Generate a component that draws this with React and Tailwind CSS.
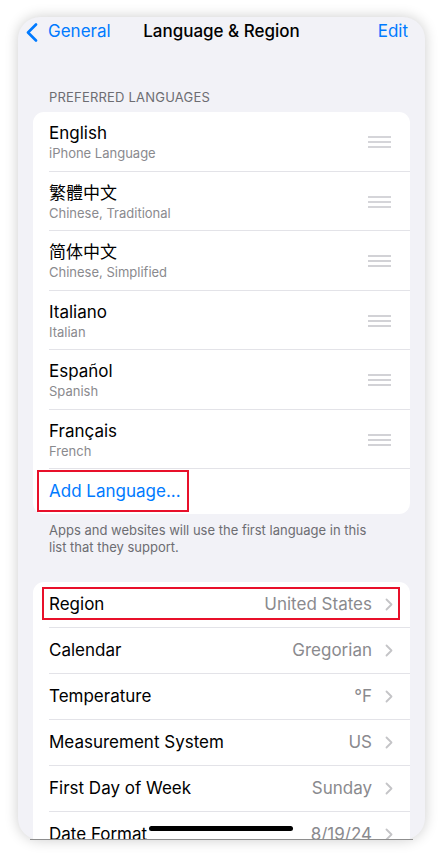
import React from 'react'

const languages = [
  { name: 'English', sub: 'iPhone Language' },
  { name: '繁體中文', sub: 'Chinese, Traditional' },
  { name: '简体中文', sub: 'Chinese, Simplified' },
  { name: 'Italiano', sub: 'Italian' },
  { name: 'Español', sub: 'Spanish' },
  { name: 'Français', sub: 'French' },
]

const settings = [
  { label: 'Region', value: 'United States', boxed: true },
  { label: 'Calendar', value: 'Gregorian' },
  { label: 'Temperature', value: '°F' },
  { label: 'Measurement System', value: 'US' },
  { label: 'First Day of Week', value: 'Sunday' },
  { label: 'Date Format', value: '8/19/24' },
]

function Grabber() {
  return (
    <svg width="23" height="12" viewBox="0 0 23 12" className="shrink-0">
      <g stroke="#c7c7cc" strokeWidth="1.6">
        <line x1="0" y1="1" x2="23" y2="1" />
        <line x1="0" y1="6" x2="23" y2="6" />
        <line x1="0" y1="11" x2="23" y2="11" />
      </g>
    </svg>
  )
}

function Chevron() {
  return (
    <svg width="8" height="13" viewBox="0 0 8 13" className="shrink-0">
      <path d="M1.5 1.5 L6.5 6.5 L1.5 11.5" fill="none" stroke="#c4c4c7" strokeWidth="1.8" strokeLinecap="round" strokeLinejoin="round" />
    </svg>
  )
}

export default function App() {
  return (
    <div
      className="relative w-[443px] h-[859px] bg-white pt-[17px] pl-[18px]"
      style={{ fontFamily: 'Inter, "Noto Sans CJK SC", "Noto Sans CJK TC", sans-serif' }}
    >
      <div className="relative w-[407px] h-[823px] rounded-[22px] bg-[#f2f2f7] overflow-hidden shadow-[0_0_14px_rgba(0,0,0,0.2)]">
        {/* nav bar */}
        <div className="relative h-[30px] flex items-center justify-between pl-[8px] pr-[17px]">
          <div className="flex items-center gap-[10px] text-[#007aff] text-[17px]">
            <svg width="12" height="19" viewBox="0 0 12 19">
              <path d="M10 1.5 L2 9.5 L10 17.5" fill="none" stroke="#007aff" strokeWidth="2.6" strokeLinecap="round" strokeLinejoin="round" />
            </svg>
            <span>General</span>
          </div>
          <span className="absolute left-0 right-0 text-center text-[17px] font-medium text-black pointer-events-none">
            Language &amp; Region
          </span>
          <span className="text-[#007aff] text-[17px]">Edit</span>
        </div>

        <div className="px-[15px]">
          <div className="mt-[42px] mb-[7px] px-4 text-[13px] leading-[16px] text-[#6d6d72] tracking-[0.2px]">
            PREFERRED LANGUAGES
          </div>

          <div className="bg-white rounded-[11px]">
            {languages.map((l) => (
              <div key={l.name} className="pl-4">
                <div className="flex items-center justify-between pr-[19px] pt-[10px] pb-[8.5px] border-b border-[#e3e3e8]">
                  <div>
                    <div className="text-[17px] leading-[22px] text-black">{l.name}</div>
                    <div className="text-[13px] leading-[18px] text-[#8a8a8e]">{l.sub}</div>
                  </div>
                  <Grabber />
                </div>
              </div>
            ))}
            <div className="relative h-[45px] flex items-center pl-4 text-[17px] text-[#007aff]">
              Add Language...
              <div className="absolute left-[4px] top-[1px] w-[152px] h-[42px] border-2 border-[#e8102a]" />
            </div>
          </div>

          <p className="mt-[8px] pl-4 pr-[40px] text-[13px] leading-[17px] text-[#6d6d72]">
            Apps and websites will use the first language in this list that they support.
          </p>

          <div className="mt-[26px] bg-white rounded-[11px]">
            {settings.map((s) => (
              <div key={s.label} className="relative pl-4">
                <div className="h-[46px] flex items-center justify-between pr-[17px] border-b border-[#e3e3e8]">
                  <span className="text-[17px] text-black">{s.label}</span>
                  <div className="flex items-center gap-[13px]">
                    <span className="text-[17px] text-[#8a8a8e]">{s.value}</span>
                    <Chevron />
                  </div>
                </div>
                {s.boxed && (
                  <div className="absolute left-[9px] right-[10px] top-[5px] h-[33px] border-2 border-[#e8102a]" />
                )}
              </div>
            ))}
          </div>
        </div>

        <div className="absolute left-[131px] top-[809px] w-[144px] h-[5px] rounded-full bg-black" />
      </div>
      <div className="absolute left-[30px] top-[839px] w-[383px] h-px bg-[#8e8e8e]" />
    </div>
  )
}
